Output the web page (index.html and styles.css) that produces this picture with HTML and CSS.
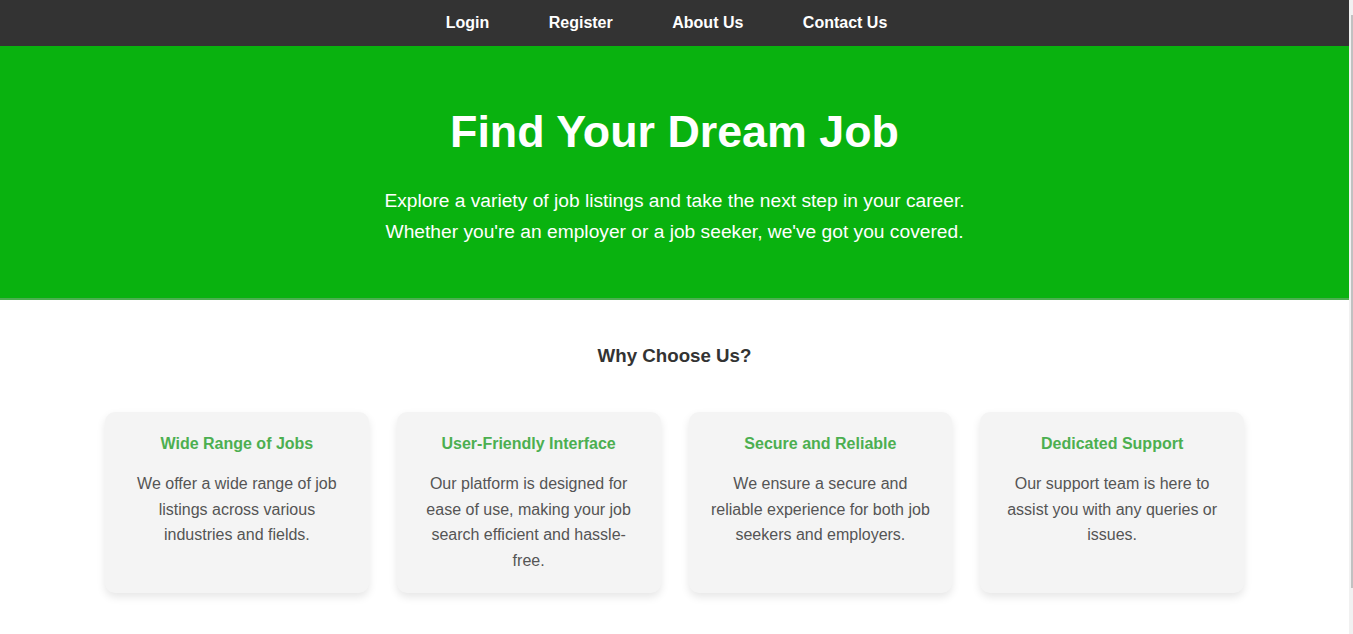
FILE: index.html
```html
<!DOCTYPE html>
<html lang="en">
<head>
<meta charset="utf-8">
<title>Find Your Dream Job</title>
<link rel="stylesheet" href="styles.css">
</head>
<body>
<div class="page">
  <div class="main">
    <header class="nav">
      <ul class="nav-list">
        <li><a href="#">Login</a></li>
        <li><a href="#">Register</a></li>
        <li><a href="#">About Us</a></li>
        <li><a href="#">Contact Us</a></li>
      </ul>
    </header>
    <section class="hero">
      <h1 class="hero-title">Find Your Dream Job</h1>
      <p class="hero-text">Explore a variety of job listings and take the next step in your career. Whether you're an employer or a job seeker, we've got you covered.</p>
    </section>
    <section class="features">
      <h2 class="features-title">Why Choose Us?</h2>
      <div class="cards">
        <div class="card">
          <h3 class="card-title">Wide Range of Jobs</h3>
          <p class="card-text">We offer a wide range of job listings across various industries and fields.</p>
        </div>
        <div class="card">
          <h3 class="card-title">User-Friendly Interface</h3>
          <p class="card-text">Our platform is designed for ease of use, making your job search efficient and hassle-free.</p>
        </div>
        <div class="card">
          <h3 class="card-title">Secure and Reliable</h3>
          <p class="card-text">We ensure a secure and reliable experience for both job seekers and employers.</p>
        </div>
        <div class="card">
          <h3 class="card-title">Dedicated Support</h3>
          <p class="card-text">Our support team is here to assist you with any queries or issues.</p>
        </div>
      </div>
    </section>
  </div>
  <div class="scrollbar"><div class="scrollbar-thumb"></div></div>
</div>
</body>
</html>
```

FILE: styles.css
```css
html, body {
  margin: 0;
  padding: 0;
  background: #ffffff;
}

body {
  font-family: "Liberation Sans", Arial, sans-serif;
  color: #333;
}

.page {
  display: flex;
  height: 634px;
  overflow: hidden;
}

.main {
  flex: 1;
  min-width: 0;
}

.scrollbar {
  width: 4px;
  background: #f1f1f1;
  display: flex;
  justify-content: flex-end;
  align-items: flex-start;
}

.scrollbar-thumb {
  width: 2px;
  height: 573px;
  margin-top: 15px;
  background: #c1c1c1;
}

/* Nav */
.nav {
  background: #333333;
  height: 46px;
  display: flex;
  align-items: center;
  justify-content: center;
}

.nav-list {
  list-style: none;
  margin: 0;
  padding: 0 16px 0 0;
  display: flex;
  gap: 59.5px;
}

.nav-list a {
  color: #ffffff;
  text-decoration: none;
  font-weight: bold;
  font-size: 16px;
  line-height: 18px;
  display: block;
  margin-top: -1px;
}

/* Hero */
.hero {
  background: #09b20f;
  border-bottom: 2px solid #4caf50;
  padding: 59.5px 20px 51px;
  text-align: center;
  color: #ffffff;
}

.hero-title {
  margin: 0 0 28px;
  font-size: 44.8px;
  font-weight: bold;
  line-height: normal;
}

.hero-text {
  margin: 0 auto;
  max-width: 600px;
  font-size: 19.2px;
  line-height: 31px;
}

/* Features */
.features {
  padding: 45px 20px 0;
  text-align: center;
}

.features-title {
  margin: 0 0 45px;
  font-size: 18.72px;
  font-weight: bold;
  color: #333;
  line-height: normal;
}

.cards {
  display: grid;
  grid-template-columns: repeat(4, 1fr);
  gap: 28px;
  max-width: 1139px;
  margin: 0 auto;
}

.card {
  background: #f4f4f4;
  border-radius: 10px;
  padding: 20px 20px 20px;
  box-shadow: 0 4px 8px rgba(0, 0, 0, 0.1);
}

.card-title {
  margin: 3px 0 18.5px;
  font-size: 16px;
  font-weight: bold;
  color: #4caf50;
  line-height: normal;
}

.card-text {
  margin: 0;
  font-size: 16px;
  line-height: 25.6px;
  color: #555;
}
```
